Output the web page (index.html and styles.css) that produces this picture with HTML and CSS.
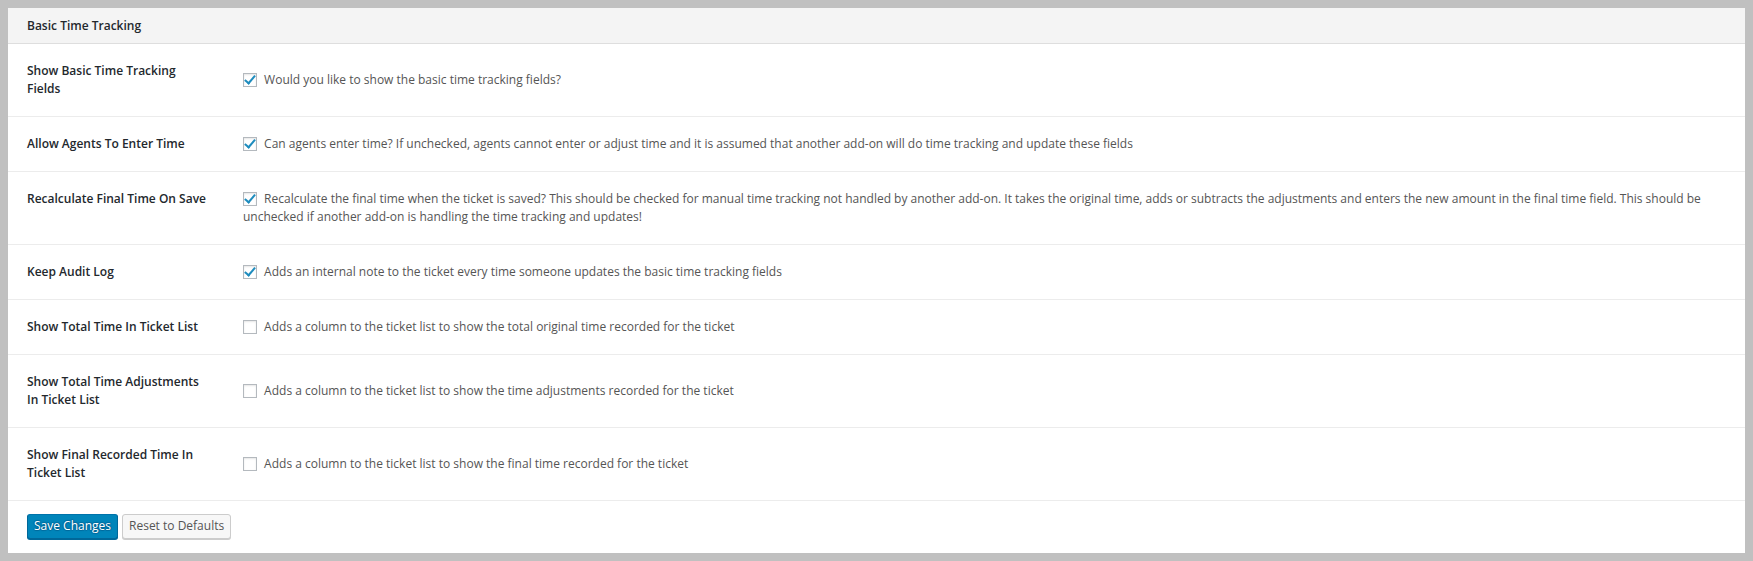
FILE: index.html
```html
<!DOCTYPE html>
<html lang="en">
<head>
<meta charset="utf-8">
<title>Basic Time Tracking</title>
<link rel="stylesheet" href="styles.css">
</head>
<body>
<div class="panel">
  <div class="panel-header">Basic Time Tracking</div>
  <table class="form-table">
    <tbody>
      <tr>
        <th>Show Basic Time Tracking Fields</th>
        <td><label><input type="checkbox" checked> Would you like to show the basic time tracking fields?</label></td>
      </tr>
      <tr>
        <th>Allow Agents To Enter Time</th>
        <td><label><input type="checkbox" checked> Can agents enter time? If unchecked, agents cannot enter or adjust time and it is assumed that another add-on will do time tracking and update these fields</label></td>
      </tr>
      <tr>
        <th>Recalculate Final Time On Save</th>
        <td><label><input type="checkbox" checked> Recalculate the final time when the ticket is saved? This should be checked for manual time tracking not handled by another add-on. It takes the original time, adds or subtracts the adjustments and enters the new amount in the final time field. This should be unchecked if another add-on is handling the time tracking and updates!</label></td>
      </tr>
      <tr>
        <th>Keep Audit Log</th>
        <td><label><input type="checkbox" checked> Adds an internal note to the ticket every time someone updates the basic time tracking fields</label></td>
      </tr>
      <tr>
        <th>Show Total Time In Ticket List</th>
        <td><label><input type="checkbox"> Adds a column to the ticket list to show the total original time recorded for the ticket</label></td>
      </tr>
      <tr>
        <th>Show Total Time Adjustments In Ticket List</th>
        <td><label><input type="checkbox"> Adds a column to the ticket list to show the time adjustments recorded for the ticket</label></td>
      </tr>
      <tr>
        <th>Show Final Recorded Time In Ticket List</th>
        <td><label><input type="checkbox"> Adds a column to the ticket list to show the final time recorded for the ticket</label></td>
      </tr>
    </tbody>
  </table>
  <div class="panel-footer">
    <button class="button button-primary" type="button">Save Changes</button>
    <button class="button" type="button">Reset to Defaults</button>
  </div>
</div>
</body>
</html>
```

FILE: styles.css
```css
html, body {
  margin: 0;
  padding: 0;
}
body {
  background: #c0c0c0;
  padding: 8px;
  font-family: "Open Sans", "Noto Sans", "Liberation Sans", sans-serif;
  font-size: 12px;
  color: #23282d;
}
.panel {
  background: #fff;
}
.panel-header {
  height: 35px;
  line-height: 35px;
  padding: 0 19px;
  background: #f4f4f4;
  border-bottom: 1px solid #dedede;
  font-weight: 600;
  color: #23282d;
}
.form-table {
  width: 100%;
  border-collapse: collapse;
  border-spacing: 0;
}
.form-table tr {
  border-bottom: 1px solid #ececec;
}
.form-table th {
  width: 180px;
  padding: 18px 26px 18px 19px;
  text-align: left;
  vertical-align: top;
  font-weight: 600;
  line-height: 18px;
  color: #23282d;
}
.form-table td {
  padding: 18px 24px 18px 10px;
  vertical-align: middle;
  line-height: 18px;
  color: #555;
}
.form-table input[type="checkbox"] {
  -webkit-appearance: none;
  appearance: none;
  position: relative;
  width: 14px;
  height: 14px;
  margin: 0 4px 0 0;
  border: 1px solid #b4b9be;
  background: #fff;
  box-shadow: inset 0 1px 2px rgba(0, 0, 0, 0.1);
  vertical-align: -3px;
  box-sizing: border-box;
}
.form-table input[type="checkbox"]:checked::before {
  content: "";
  position: absolute;
  left: 3px;
  top: -1px;
  width: 4px;
  height: 9px;
  border-right: 2.5px solid #1e8cbe;
  border-bottom: 2.5px solid #1e8cbe;
  transform: rotate(40deg);
}
.panel-footer {
  display: flex;
  gap: 4px;
  padding: 13px 19px 14px;
}
.button {
  height: 25px;
  padding: 0 6px 1px;
  font-family: inherit;
  font-size: 12px;
  line-height: 22px;
  border-radius: 3px;
  border: 1px solid #ccc;
  background: #f7f7f7;
  color: #555;
  box-shadow: 0 1px 0 #ccc;
  cursor: pointer;
  box-sizing: border-box;
}
.button-primary {
  background: #0085ba;
  border-color: #0073aa #006799 #006799;
  color: #fff;
  box-shadow: 0 1px 0 #006799;
  text-shadow: 0 -1px 1px #006799, 1px 0 1px #006799, 0 1px 1px #006799, -1px 0 1px #006799;
}
```
